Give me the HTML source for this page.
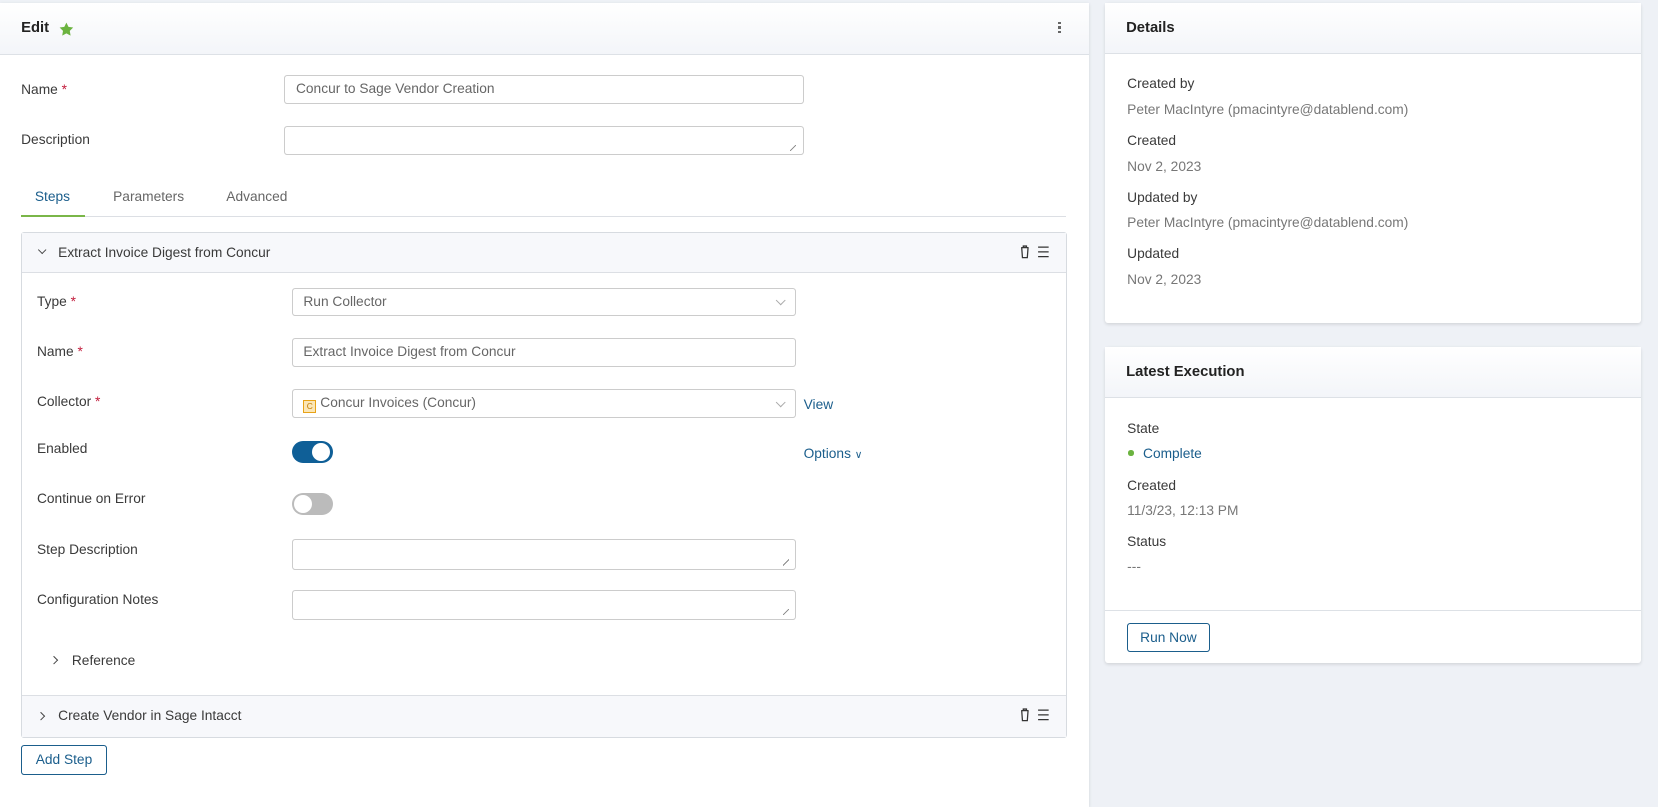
<!DOCTYPE html>
<html><head><meta charset="utf-8">
<style>
html{zoom:1.0574}
*{box-sizing:border-box;margin:0;padding:0}
body{width:1568px;height:738px;overflow:hidden;background:#eef1f6;font-family:"Liberation Sans",sans-serif;font-size:13px;color:#3a3a3a;position:relative}
.abs{position:absolute}
.card{position:absolute;background:#fff;box-shadow:0 1px 3px rgba(0,0,0,.12);border-radius:3px}
.hdr{position:absolute;left:0;right:0;top:0;height:48px;background:linear-gradient(#fff,#f3f5f9);border-bottom:1px solid #dde1e6}
.ttl{position:absolute;left:20px;top:17px;font-size:14px;font-weight:bold;color:#222}
.inp{position:absolute;border:1px solid #ccc;border-radius:3px;background:#fff;color:#666;padding-left:10px;line-height:25px;font-size:13px}
.lbl{position:absolute;font-size:13px;color:#3a3a3a}
.req{color:#c21d3c}
.val{position:absolute;font-size:13px;color:#777}
.caret{position:absolute;right:10px;top:8px;width:7px;height:7px;border-right:1px solid #aaa;border-bottom:1px solid #aaa;transform:rotate(45deg)}
.grip{position:absolute;right:6px;bottom:3px;width:6px;height:6px;background:linear-gradient(135deg,transparent 45%,#888 46%,#888 54%,transparent 55%)}
.btn{position:absolute;border:1px solid #1b5e8c;border-radius:3px;color:#1b5e8c;text-align:center;font-size:13px;background:#fff}
.blue{color:#1b5e8c}
</style></head><body>

<div class="card" style="left:0;top:3px;width:1030px;height:760px;border-radius:0">
  <div class="hdr" style="height:49px"></div>
  <div class="ttl" style="top:16px">Edit</div>
  <svg class="abs" style="left:56px;top:18px" width="14" height="14" viewBox="0 0 24 24"><path d="M12 1l3.4 7 7.6 1-5.5 5.3 1.3 7.7L12 18.4 5.2 22l1.3-7.7L1 9l7.6-1z" fill="#6bb33f"/></svg>
  <div class="abs" style="left:1001px;top:18px;width:3px">
    <div style="width:2px;height:2px;background:#666;margin-bottom:2px"></div>
    <div style="width:2px;height:2px;background:#666;margin-bottom:2px"></div>
    <div style="width:2px;height:2px;background:#666"></div>
  </div>
</div>

<div class="lbl" style="left:20px;top:78px">Name <span class="req">*</span></div>
<div class="inp" style="left:269px;top:71px;width:491px;height:27px">Concur to Sage Vendor Creation</div>
<div class="lbl" style="left:20px;top:125px">Description</div>
<div class="inp" style="left:269px;top:119px;width:491px;height:28px"><div class="grip"></div></div>

<div class="abs" style="left:20px;top:204px;width:988px;height:1px;background:#dcdfe4"></div>
<div class="abs" style="left:20px;top:203px;width:60px;height:2px;background:#7ab648"></div>
<div class="lbl blue" style="left:33px;top:179px">Steps</div>
<div class="lbl" style="left:107px;top:179px;color:#666">Parameters</div>
<div class="lbl" style="left:214px;top:179px;color:#666">Advanced</div>

<div class="abs" style="left:20px;top:219px;width:989px;height:479px;border:1px solid #d7dbe0;border-radius:3px;background:#fff"></div>
<div class="abs" style="left:21px;top:220px;width:987px;height:38px;background:#f7f8fb;border-bottom:1px solid #dcdfe4"></div>
<div class="abs" style="left:37px;top:234px;width:6px;height:6px;border-right:1px solid #444;border-bottom:1px solid #444;transform:rotate(45deg)"></div>
<div class="lbl" style="left:55px;top:232px">Extract Invoice Digest from Concur</div>
<svg class="abs" style="left:963px;top:232px" width="30" height="13" viewBox="0 0 30 13"><path d="M3 2.5h7M5 2.5V1h3v1.5M3.5 2.5l.7 9.5h4.6l.7-9.5" fill="none" stroke="#333" stroke-width="1.2"/><path d="M19 2h10M19 6.5h10M19 11h10" stroke="#333" stroke-width="1.2"/></svg>

<div class="lbl" style="left:35px;top:278px">Type <span class="req">*</span></div>
<div class="inp" style="left:276px;top:272px;width:477px;height:27px">Run Collector<div class="caret"></div></div>
<div class="lbl" style="left:35px;top:325px">Name <span class="req">*</span></div>
<div class="inp" style="left:276px;top:320px;width:477px;height:27px">Extract Invoice Digest from Concur</div>
<div class="lbl" style="left:35px;top:373px">Collector <span class="req">*</span></div>
<div class="inp" style="left:276px;top:368px;width:477px;height:27px"><span style="display:inline-block;width:12px;height:12px;border:1px solid #e8a317;background:#fbe6b6;vertical-align:-2px;margin-right:4px;font-size:8px;line-height:10px;text-align:center;color:#c07a00">C</span>Concur Invoices (Concur)<div class="caret"></div></div>
<div class="lbl blue" style="left:760px;top:375px">View</div>

<div class="lbl" style="left:35px;top:417px">Enabled</div>
<div class="abs" style="left:276px;top:417px;width:39px;height:21px;border-radius:11px;background:#0f5f97"></div>
<div class="abs" style="left:295px;top:419px;width:17px;height:17px;border-radius:50%;background:#fff"></div>
<div class="lbl blue" style="left:760px;top:422px">Options <span style="font-size:10px">&#8744;</span></div>

<div class="lbl" style="left:35px;top:464px">Continue on Error</div>
<div class="abs" style="left:276px;top:466px;width:39px;height:21px;border-radius:11px;background:#bbb"></div>
<div class="abs" style="left:278px;top:468px;width:17px;height:17px;border-radius:50%;background:#fff"></div>

<div class="lbl" style="left:35px;top:513px">Step Description</div>
<div class="inp" style="left:276px;top:510px;width:477px;height:29px"><div class="grip"></div></div>
<div class="lbl" style="left:35px;top:560px">Configuration Notes</div>
<div class="inp" style="left:276px;top:558px;width:477px;height:28px"><div class="grip"></div></div>

<div class="abs" style="left:48px;top:621px;width:6px;height:6px;border-right:1px solid #444;border-bottom:1px solid #444;transform:rotate(-45deg)"></div>
<div class="lbl" style="left:68px;top:618px">Reference</div>

<div class="abs" style="left:21px;top:657px;width:987px;height:40px;background:#f7f8fb;border-top:1px solid #dcdfe4"></div>
<div class="abs" style="left:36px;top:674px;width:6px;height:6px;border-right:1px solid #444;border-bottom:1px solid #444;transform:rotate(-45deg)"></div>
<div class="lbl" style="left:55px;top:670px">Create Vendor in Sage Intacct</div>
<svg class="abs" style="left:963px;top:670px" width="30" height="13" viewBox="0 0 30 13"><path d="M3 2.5h7M5 2.5V1h3v1.5M3.5 2.5l.7 9.5h4.6l.7-9.5" fill="none" stroke="#333" stroke-width="1.2"/><path d="M19 2h10M19 6.5h10M19 11h10" stroke="#333" stroke-width="1.2"/></svg>

<div class="btn" style="left:20px;top:705px;width:81px;height:28px;line-height:26px">Add Step</div>

<div class="card" style="left:1045px;top:3px;width:507px;height:302px">
  <div class="hdr"></div>
  <div class="ttl" style="top:16px">Details</div>
  <div class="lbl" style="left:21px;top:69px">Created by</div>
  <div class="val" style="left:21px;top:93px">Peter MacIntyre (pmacintyre@datablend.com)</div>
  <div class="lbl" style="left:21px;top:123px">Created</div>
  <div class="val" style="left:21px;top:147px">Nov 2, 2023</div>
  <div class="lbl" style="left:21px;top:177px">Updated by</div>
  <div class="val" style="left:21px;top:200px">Peter MacIntyre (pmacintyre@datablend.com)</div>
  <div class="lbl" style="left:21px;top:230px">Updated</div>
  <div class="val" style="left:21px;top:254px">Nov 2, 2023</div>
</div>

<div class="card" style="left:1045px;top:328px;width:507px;height:299px">
  <div class="hdr"></div>
  <div class="ttl" style="top:16px">Latest Execution</div>
  <div class="lbl" style="left:21px;top:70px">State</div>
  <div class="abs" style="left:22px;top:98px;width:5px;height:5px;border-radius:50%;background:#6bb33f"></div>
  <div class="lbl blue" style="left:36px;top:94px">Complete</div>
  <div class="lbl" style="left:21px;top:124px">Created</div>
  <div class="val" style="left:21px;top:148px">11/3/23, 12:13 PM</div>
  <div class="lbl" style="left:21px;top:177px">Status</div>
  <div class="val" style="left:21px;top:201px">---</div>
  <div class="abs" style="left:0;right:0;top:249px;height:1px;background:#dde1e6"></div>
  <div class="btn" style="left:21px;top:261px;width:78px;height:28px;line-height:26px">Run Now</div>
</div>

</body></html>
